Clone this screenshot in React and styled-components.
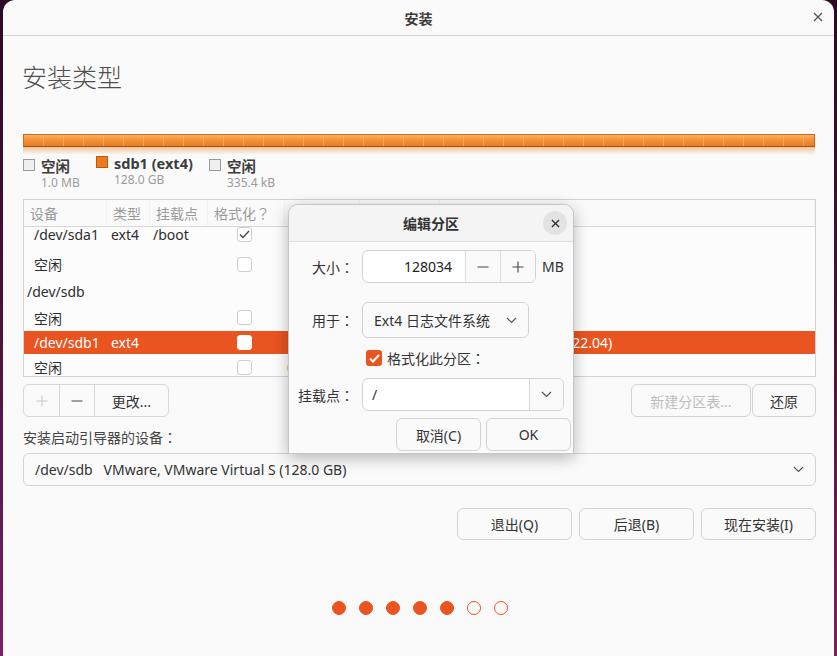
import React from 'react'
import styled, { createGlobalStyle } from 'styled-components'

const FONT = `"Noto Sans", "Noto Sans CJK SC", sans-serif`
const ORANGE = '#e95420'

const GlobalStyle = createGlobalStyle`
  html, body {
    margin: 0;
    padding: 0;
  }
  body {
    width: 837px;
    height: 656px;
    overflow: hidden;
    font-family: ${FONT};
    background: linear-gradient(180deg, #2c0a22 0%, #4a1238 50%, #7a2163 100%);
  }
  * {
    box-sizing: border-box;
  }
`

// full-width punctuation sits centred in its cell in this face
const Punct = styled.span`
  font-family: "Noto Sans CJK TC", "Noto Sans CJK SC", sans-serif;
`

const Desktop = styled.div`
  width: 837px;
  height: 656px;
  display: flex;
  padding: 0 3px;
`

const Window = styled.div`
  position: relative;
  flex: 1;
  display: flex;
  flex-direction: column;
  background: #fafafa;
  border-radius: 12px 12px 0 0;
  overflow: hidden;
`

const TitleBar = styled.div`
  height: 36px;
  flex-shrink: 0;
  display: grid;
  grid-template-columns: 1fr auto 1fr;
  align-items: center;
  border-bottom: 1px solid #d4d4d4;
  color: #3a3a3a;
  font-size: 14px;
  font-weight: 700;
`

const CloseGlyph = styled.span`
  justify-self: end;
  display: flex;
  margin-right: 11px;
  margin-top: -2px;
`

const Content = styled.div`
  display: flex;
  flex-direction: column;
  padding: 0 18px 0 20px;
`

const Heading = styled.h1`
  margin: 25px 0 0 -1px;
  height: 32px;
  line-height: 32px;
  font-size: 25px;
  font-weight: 300;
  color: #505050;
`

const PartitionBar = styled.div`
  margin-top: 41px;
  height: 13px;
  margin-right: 1px;
  border: 1px solid #c96a18;
  border-bottom-color: #a4520c;
  background:
    repeating-linear-gradient(90deg, transparent 0 19px, rgba(255, 205, 150, 0.4) 19px 20px),
    linear-gradient(180deg, #fbb060 0%, #f39238 45%, #e57c22 100%);
`

const BarReflection = styled.div`
  height: 8px;
  margin-right: 1px;
  background: linear-gradient(180deg, rgba(233, 140, 60, 0.5) 0%, rgba(250, 250, 250, 0) 100%);
`

const Legend = styled.div`
  display: flex;
  height: 37px;
`

const LegendItem = styled.div`
  display: flex;
  gap: 6px;
  width: ${p => p.$width}px;
  margin-top: ${p => p.$raise ? -1 : 2}px;
`

const Swatch = styled.span`
  width: 12px;
  height: 12px;
  margin-top: 2px;
  flex-shrink: 0;
  background: ${p => p.$color};
  border: 1px solid ${p => p.$border};
`

const LegendText = styled.div`
  display: flex;
  flex-direction: column;
`

const LegendName = styled.span`
  font-size: 14.5px;
  font-weight: 700;
  line-height: 18px;
  color: #3c3c3c;
`

const LegendSize = styled.span`
  font-size: 12px;
  line-height: 16px;
  color: #9a9a9a;
`

const Table = styled.div`
  margin-top: 7px;
  height: 178px;
  border: 1px solid #d2d2d2;
  background: #fcfcfc;
  display: flex;
  flex-direction: column;
  overflow: hidden;
`

const COLS = '83px 43px 58px 77px 75px 80px 1fr'

const HeaderRow = styled.div`
  display: grid;
  grid-template-columns: ${COLS};
  height: 27px;
  flex-shrink: 0;
  border-bottom: 1px solid #d8d8d8;
  background: #fafafa;
`

const HeaderCell = styled.div`
  display: flex;
  align-items: center;
  padding-left: 6px;
  font-size: 14px;
  color: #9a9a9a;
  border-right: 1px solid #f3f3f3;
`

const TableBody = styled.div`
  flex: 1;
  overflow: hidden;
`

const Row = styled.div`
  display: grid;
  grid-template-columns: ${COLS};
  height: ${p => p.$h}px;
  margin-top: ${p => p.$offset || 0}px;
  align-items: center;
  font-size: 14px;
  color: ${p => p.$selected ? '#fff' : '#2e2e2e'};
  background: ${p => p.$selected ? ORANGE : 'transparent'};
`

const Cell = styled.div`
  padding-left: ${p => p.$pad ?? 4}px;
  white-space: nowrap;
  overflow: visible;
`

const CheckBox = styled.span`
  display: flex;
  align-items: center;
  justify-content: center;
  width: 15px;
  height: 15px;
  margin-left: 29px;
  border-radius: 3px;
  border: 1px solid ${p => p.$selected ? '#fff' : '#cfcfcf'};
  background: #fff;
`

const Toolbar = styled.div`
  margin-top: 7px;
  height: 33px;
  display: flex;
  justify-content: space-between;
`

const ButtonGroup = styled.div`
  display: flex;
  border: 1px solid #d6d6d6;
  border-radius: 6px;
  overflow: hidden;
  background: #fafafa;
`

const GroupButton = styled.div`
  width: ${p => p.$w}px;
  display: flex;
  align-items: center;
  justify-content: center;
  font-size: 14px;
  color: ${p => p.$disabled ? '#c4c4c4' : '#333'};
  & + & {
    border-left: 1px solid #d6d6d6;
  }
`

const RightTools = styled.div`
  display: flex;
  gap: 1px;
`

const Button = styled.div`
  width: ${p => p.$w}px;
  height: ${p => p.$h || 33}px;
  display: flex;
  align-items: center;
  justify-content: center;
  border: 1px solid #d2d2d2;
  border-radius: 6px;
  background: #fafafa;
  font-size: 14px;
  color: ${p => p.$disabled ? '#bdbdbd' : '#333'};
`

const FieldLabel = styled.div`
  margin-top: 11px;
  line-height: 18px;
  font-size: 14px;
  color: #444;
`

const Combo = styled.div`
  margin-top: 6px;
  height: 33px;
  display: flex;
  align-items: center;
  justify-content: space-between;
  padding: 0 11px;
  border: 1px solid #d2d2d2;
  border-radius: 6px;
  font-size: 14px;
  color: #333;
  white-space: pre;
`

const NavRow = styled.div`
  margin-top: 22px;
  display: flex;
  justify-content: flex-end;
  gap: 7px;
`

const Dots = styled.div`
  margin-top: 61px;
  display: flex;
  justify-content: center;
  gap: 13px;
  padding-left: 1px;
`

const Dot = styled.span`
  width: 14px;
  height: 14px;
  border-radius: 50%;
  border: 1.5px solid ${ORANGE};
  background: ${p => p.$filled ? ORANGE : 'transparent'};
`

/* edit partition dialog */

const Dialog = styled.div`
  position: absolute;
  left: 285px;
  top: 204px;
  width: 286px;
  height: 250px;
  display: flex;
  flex-direction: column;
  background: #fafafa;
  border: 1px solid #c6c6c6;
  border-radius: 10px 10px 0 0;
  box-shadow: 0 4px 16px rgba(0, 0, 0, 0.28);
`

const DialogHeader = styled.div`
  height: 37px;
  flex-shrink: 0;
  display: grid;
  grid-template-columns: 1fr auto 1fr;
  align-items: center;
  border-bottom: 1px solid #dcdcdc;
  background: #f4f4f4;
  border-radius: 10px 10px 0 0;
  font-size: 14px;
  font-weight: 700;
  color: #333;
`

const DialogClose = styled.span`
  justify-self: end;
  width: 24px;
  height: 24px;
  margin-right: 6px;
  border-radius: 50%;
  background: #e3e3e3;
  display: flex;
  align-items: center;
  justify-content: center;
`

const DialogBody = styled.div`
  display: flex;
  flex-direction: column;
  padding-top: 8px;
`

const FormRow = styled.div`
  display: flex;
  align-items: center;
  gap: 8px;
  margin-top: ${p => p.$mt || 0}px;
  height: ${p => p.$h}px;
`

const FormLabel = styled.div`
  width: 65px;
  text-align: right;
  font-size: 14px;
  color: #333;
  white-space: nowrap;
`

const SpinBox = styled.div`
  width: 174px;
  height: 33px;
  display: flex;
  border: 1px solid #d2d2d2;
  border-radius: 6px;
  background: #fff;
  overflow: hidden;
`

const SpinValue = styled.div`
  flex: 1;
  display: flex;
  align-items: center;
  justify-content: flex-end;
  padding-right: 13px;
  font-size: 14px;
  color: #222;
`

const SpinButton = styled.div`
  width: 35px;
  display: flex;
  align-items: center;
  justify-content: center;
  border-left: 1px solid #dedede;
  background: #fafafa;
`

const Unit = styled.span`
  font-size: 14px;
  color: #333;
  margin-left: -2px;
`

const Select = styled.div`
  width: ${p => p.$w}px;
  height: ${p => p.$h}px;
  display: flex;
  align-items: center;
  border: 1px solid #d2d2d2;
  border-radius: 6px;
  background: ${p => p.$entry ? '#fff' : '#fafafa'};
  font-size: 14px;
  color: #333;
  overflow: hidden;
`

const SelectText = styled.span`
  flex: 1;
  padding-left: ${p => p.$pad}px;
`

const SelectArrow = styled.span`
  width: ${p => p.$w}px;
  align-self: stretch;
  display: flex;
  align-items: center;
  justify-content: center;
  border-left: ${p => p.$divider ? '1px solid #d8d8d8' : 'none'};
  background: #fafafa;
`

const CheckRow = styled.div`
  display: flex;
  align-items: center;
  gap: 5px;
  margin-top: 12px;
  height: 16px;
  padding-left: 77px;
  font-size: 14px;
  color: #333;
`

const OrangeCheck = styled.span`
  width: 16px;
  height: 16px;
  border-radius: 3px;
  background: ${ORANGE};
  display: flex;
  align-items: center;
  justify-content: center;
`

const DialogActions = styled.div`
  margin-top: 7px;
  display: flex;
  justify-content: flex-end;
  gap: 5px;
  padding-right: 2px;
`

const Chevron = ({ color = '#555' }) => (
  <svg width="11" height="7" viewBox="0 0 11 7">
    <polyline points="1,1 5.5,5.5 10,1" fill="none" stroke={color} strokeWidth="1.2" />
  </svg>
)

const Cross = ({ size = 10, color = '#555', width = 1.3 }) => (
  <svg width={size} height={size} viewBox="0 0 10 10">
    <path d="M1 1L9 9M9 1L1 9" stroke={color} strokeWidth={width} />
  </svg>
)

const Minus = () => (
  <svg width="12" height="12" viewBox="0 0 12 12">
    <path d="M0.5 6H11.5" stroke="#444" strokeWidth="1.1" />
  </svg>
)

const Plus = ({ color = '#444' }) => (
  <svg width="12" height="12" viewBox="0 0 12 12">
    <path d="M0.5 6H11.5M6 0.5V11.5" stroke={color} strokeWidth="1.1" />
  </svg>
)

const Tick = ({ color = '#444', width = 1.3 }) => (
  <svg width="11" height="9" viewBox="0 0 11 9">
    <polyline points="1,4.5 4,7.5 10,1" fill="none" stroke={color} strokeWidth={width} />
  </svg>
)

const rows = [
  { h: 31, offset: -8, dev: '/dev/sda1', type: 'ext4', mount: '/boot', check: 'on', size: '1074 MB', used: '1024 MB', os: '' },
  { h: 28, dev: '空闲', check: 'off', size: '1 MB' },
  { h: 26, dev: '/dev/sdb', pad: 3 },
  { h: 27, dev: '空闲', check: 'off', size: '1 MB' },
  { h: 23, dev: '/dev/sdb1', type: 'ext4', check: 'off', selected: true, size: '128034 MB', used: '5342 MB', os: 'Ubuntu 22.04 LTS (22.04)' },
  { h: 26, dev: '空闲', check: 'off', size: '0 MB' },
]

const PartitionRow = ({ row }) => (
  <Row $h={row.h} $offset={row.offset} $selected={row.selected}>
    <Cell $pad={row.pad ?? 10}>{row.dev}</Cell>
    <Cell>{row.type}</Cell>
    <Cell $pad={3}>{row.mount}</Cell>
    <Cell $pad={0}>
      {row.check && (
        <CheckBox $selected={row.selected}>
          {row.check === 'on' && <Tick />}
        </CheckBox>
      )}
    </Cell>
    <Cell $pad={2}>{row.size}</Cell>
    <Cell $pad={2}>{row.used}</Cell>
    <Cell $pad={9}>{row.os}</Cell>
  </Row>
)

const EditPartitionDialog = () => (
  <Dialog>
    <DialogHeader>
      <span />
      <span>编辑分区</span>
      <DialogClose><Cross size={9} color="#333" width={1.5} /></DialogClose>
    </DialogHeader>
    <DialogBody>
      <FormRow $h={33}>
        <FormLabel>大小<Punct>：</Punct></FormLabel>
        <SpinBox>
          <SpinValue>128034</SpinValue>
          <SpinButton><Minus /></SpinButton>
          <SpinButton><Plus /></SpinButton>
        </SpinBox>
        <Unit>MB</Unit>
      </FormRow>
      <FormRow $h={36} $mt={19}>
        <FormLabel>用于<Punct>：</Punct></FormLabel>
        <Select $w={167} $h={36}>
          <SelectText $pad={11}>Ext4 日志文件系统</SelectText>
          <SelectArrow $w={34}><Chevron /></SelectArrow>
        </Select>
      </FormRow>
      <CheckRow>
        <OrangeCheck><Tick color="#fff" width={2} /></OrangeCheck>
        <span>格式化此分区<Punct>：</Punct></span>
      </CheckRow>
      <FormRow $h={33} $mt={12}>
        <FormLabel>挂载点<Punct>：</Punct></FormLabel>
        <Select $w={202} $h={33} $entry>
          <SelectText $pad={9}>/</SelectText>
          <SelectArrow $w={34} $divider><Chevron /></SelectArrow>
        </Select>
      </FormRow>
      <DialogActions>
        <Button $w={85}>取消(C)</Button>
        <Button $w={85}>OK</Button>
      </DialogActions>
    </DialogBody>
  </Dialog>
)

export default function App() {
  return (
    <>
      <GlobalStyle />
      <Desktop>
        <Window>
          <TitleBar>
            <span />
            <span>安装</span>
            <CloseGlyph><Cross /></CloseGlyph>
          </TitleBar>
          <Content>
            <Heading>安装类型</Heading>
            <PartitionBar />
            <BarReflection />
            <Legend>
              <LegendItem $width={73}>
                <Swatch $color="#efefef" $border="#9a9a9a" />
                <LegendText>
                  <LegendName>空闲</LegendName>
                  <LegendSize>1.0 MB</LegendSize>
                </LegendText>
              </LegendItem>
              <LegendItem $width={113} $raise>
                <Swatch $color="#f07a1c" $border="#b85a10" />
                <LegendText>
                  <LegendName>sdb1 (ext4)</LegendName>
                  <LegendSize>128.0 GB</LegendSize>
                </LegendText>
              </LegendItem>
              <LegendItem $width={100}>
                <Swatch $color="#efefef" $border="#9a9a9a" />
                <LegendText>
                  <LegendName>空闲</LegendName>
                  <LegendSize>335.4 kB</LegendSize>
                </LegendText>
              </LegendItem>
            </Legend>
            <Table>
              <HeaderRow>
                <HeaderCell>设备</HeaderCell>
                <HeaderCell>类型</HeaderCell>
                <HeaderCell>挂载点</HeaderCell>
                <HeaderCell>格式化<Punct>？</Punct></HeaderCell>
                <HeaderCell>大小</HeaderCell>
                <HeaderCell>已用</HeaderCell>
                <HeaderCell>系统</HeaderCell>
              </HeaderRow>
              <TableBody>
                {rows.map((row, i) => <PartitionRow key={i} row={row} />)}
              </TableBody>
            </Table>
            <Toolbar>
              <ButtonGroup>
                <GroupButton $w={35} $disabled><Plus color="#c8c8c8" /></GroupButton>
                <GroupButton $w={35}><Minus /></GroupButton>
                <GroupButton $w={74}>更改...</GroupButton>
              </ButtonGroup>
              <RightTools>
                <Button $w={120} $disabled>新建分区表...</Button>
                <Button $w={64}>还原</Button>
              </RightTools>
            </Toolbar>
            <FieldLabel>安装启动引导器的设备<Punct>：</Punct></FieldLabel>
            <Combo>
              <span>/dev/sdb   VMware, VMware Virtual S (128.0 GB)</span>
              <Chevron />
            </Combo>
            <NavRow>
              <Button $w={115} $h={32}>退出(Q)</Button>
              <Button $w={115} $h={32}>后退(B)</Button>
              <Button $w={115} $h={32}>现在安装(I)</Button>
            </NavRow>
            <Dots>
              {[1, 1, 1, 1, 1, 0, 0].map((f, i) => <Dot key={i} $filled={!!f} />)}
            </Dots>
          </Content>
          <EditPartitionDialog />
        </Window>
      </Desktop>
    </>
  )
}
